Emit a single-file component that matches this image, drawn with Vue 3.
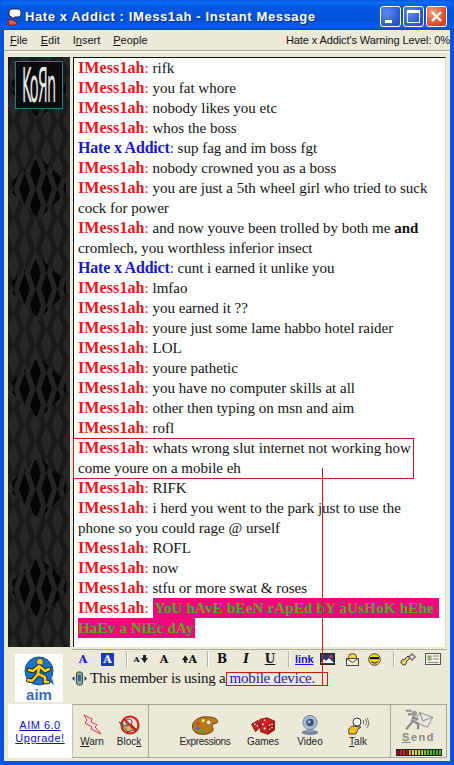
<script setup>
const names = { me: 'IMess1ah', them: 'Hate x Addict' }

const lines = [
  { who: 'me', text: 'rifk' },
  { who: 'me', text: 'you fat whore' },
  { who: 'me', text: 'nobody likes you etc' },
  { who: 'me', text: 'whos the boss' },
  { who: 'them', text: 'sup fag and im boss fgt' },
  { who: 'me', text: 'nobody crowned you as a boss' },
  { who: 'me', text: 'you are just a 5th wheel girl who tried to suck', more: 'cock for power' },
  { who: 'me', text: 'and now youve been trolled by both me ', bold: 'and', more: 'cromlech, you worthless inferior insect' },
  { who: 'them', text: 'cunt i earned it unlike you' },
  { who: 'me', text: 'lmfao' },
  { who: 'me', text: 'you earned it ??' },
  { who: 'me', text: 'youre just some lame habbo hotel raider' },
  { who: 'me', text: 'LOL' },
  { who: 'me', text: 'youre pathetic' },
  { who: 'me', text: 'you have no computer skills at all' },
  { who: 'me', text: 'other then typing on msn and aim' },
  { who: 'me', text: 'rofl' },
  { who: 'me', text: 'whats wrong slut internet not working how', more: 'come youre on a mobile eh' },
  { who: 'me', text: 'RIFK' },
  { who: 'me', text: 'i herd you went to the park just to use the', more: 'phone so you could rage @ urself' },
  { who: 'me', text: 'ROFL' },
  { who: 'me', text: 'now' },
  { who: 'me', text: 'stfu or more swat & roses' }
]

const meter = ['#a01010', '#d02020', '#d02020', '#a01010', '#e0b020', '#e8d820', '#e8d820', '#c8d820', '#a0d020', '#80c820', '#60c020', '#50b820', '#40b020', '#40b020', '#40b020']
</script>

<template>
  <div class="win">
    <div class="titlebar">
      <svg class="appicon" width="16" height="18" viewBox="0 0 16 18">
        <path d="M5 1h8l2 2v4l-2 2H9L6 11V9H5L3 7V3z" fill="#fff" stroke="#223" stroke-width="1" />
        <path d="M2 12l5 0 4 3-2 2H3z" fill="#e06050" stroke="#802020" stroke-width="1" />
      </svg>
      <span class="title">Hate x Addict : IMess1ah - Instant Message</span>
      <div class="winbtns">
        <div class="wb min"><i></i></div>
        <div class="wb max"><i></i></div>
        <div class="wb close">
          <svg width="13" height="13" viewBox="0 0 13 13"><path d="M2 2l9 9M11 2l-9 9" stroke="#fff" stroke-width="2.4" /></svg>
        </div>
      </div>
    </div>

    <div class="client">
      <div class="menubar">
        <span class="mi"><u>F</u>ile</span>
        <span class="mi"><u>E</u>dit</span>
        <span class="mi">I<u>n</u>sert</span>
        <span class="mi"><u>P</u>eople</span>
        <span class="warnlevel">Hate x Addict's Warning Level: 0%</span>
      </div>

      <div class="main">
        <div class="sidepanel">
          <svg class="harlequin" width="62" height="590">
            <defs>
              <pattern id="dia" width="22" height="64" patternUnits="userSpaceOnUse">
                <rect width="22" height="64" fill="#191919" />
                <path d="M5.500 0L11 16 5.500 32 0 16zM5.500 32L11 48 5.500 64 0 48zM16.500 -16L22 0 16.500 16 11 0zM16.500 16L22 32 16.500 48 11 32zM16.500 48L22 64 16.500 80 11 64z" fill="#272727" />
              </pattern>
              <pattern id="dark" width="22" height="64" patternUnits="userSpaceOnUse">
                <rect width="22" height="64" fill="#232323" />
                <path d="M5.500 0L11 16 5.500 32 0 16zM5.500 32L11 48 5.500 64 0 48zM16.500 -16L22 0 16.500 16 11 0zM16.500 16L22 32 16.500 48 11 32zM16.500 48L22 64 16.500 80 11 64z" fill="#050505" />
              </pattern>
              <pattern id="big" width="62" height="100" patternUnits="userSpaceOnUse">
                <path d="M31 0L58 24 58 36 31 62 4 36 4 24z" fill="url(#dark)" />
              </pattern>
            </defs>
            <rect width="62" height="590" fill="url(#dia)" />
            <rect width="62" height="590" fill="url(#big)" />
          </svg>
          <div class="korn"><span>KoЯn</span></div>
        </div>

        <div class="chat">
          <div v-for="(l, i) in lines" :key="i" class="msg">
            <b :class="l.who">{{ names[l.who] }}</b><span :class="l.who + ' colon'">:</span> {{ l.text }}<b v-if="l.bold">{{ l.bold }}</b>
            <template v-if="l.more"><br>{{ l.more }}</template>
          </div>
          <div class="msg">
            <b class="me">IMess1ah</b><span class="me colon">:</span> <b class="loud first">YoU hAvE bEeN rApEd bY aUsHoK hEhe</b><br>
            <b class="loud">HaEv a NiEc dAy</b>
          </div>
        </div>
      </div>

      <div class="lower">
        <div class="logo">
          <svg width="48" height="33" viewBox="0 0 48 33">
            <circle cx="24" cy="17" r="14" fill="#1c74c8" stroke="#0c4a90" stroke-width="1" />
            <path d="M33 27l6 4-2-7z" fill="#1c74c8" />
            <circle cx="25" cy="8" r="3.400" fill="#f8d020" stroke="#333" stroke-width=".8" />
            <path d="M24 12l-6 5-4-1M24 12l6 5 4-2M24 12l-1 8-6 7-4-1M23 20l7 3 0 5 3 0" fill="none" stroke="#222" stroke-width="4.400" stroke-linecap="round" stroke-linejoin="round" />
            <path d="M24 12l-6 5-4-1M24 12l6 5 4-2M24 12l-1 8-6 7-4-1M23 20l7 3 0 5 3 0" fill="none" stroke="#f8d020" stroke-width="2.600" stroke-linecap="round" stroke-linejoin="round" />
          </svg>
          <span class="aimword">aim</span>
        </div>

        <div class="compose">
          <div class="fmtbar">
            <span class="fa bluea">A</span>
            <span class="fa boxa">A</span>
            <i class="sep s1"></i>
            <span class="fa shrink">
              <small>A</small>
              <svg width="7" height="8" viewBox="0 0 7 8"><path d="M2 0h3v3h2L3.500 8 0 3h2z" fill="#222" /></svg>
            </span>
            <span class="fa plain">A</span>
            <span class="fa grow">
              <svg width="7" height="8" viewBox="0 0 7 8"><path d="M2 8h3V5h2L3.500 0 0 5h2z" fill="#222" /></svg>
              <span>A</span>
            </span>
            <i class="sep s2"></i>
            <span class="fb bold">B</span>
            <span class="fb ital">I</span>
            <span class="fb und">U</span>
            <i class="sep s3"></i>
            <span class="linkbtn">link</span>
            <svg class="pic" width="15" height="12" viewBox="0 0 15 12">
              <rect x=".5" y=".5" width="14" height="11" fill="#283868" stroke="#222" />
              <path d="M1 10l3-4 2 2 3-3 5 5z" fill="#fff" />
              <circle cx="11" cy="3.500" r="1.500" fill="#e04040" />
            </svg>
            <svg class="mail" width="13" height="13" viewBox="0 0 13 13">
              <circle cx="6.500" cy="4.500" r="4" fill="#f4d840" stroke="#444" />
              <rect x=".5" y="5.500" width="12" height="7" fill="#f8f0d0" stroke="#444" />
              <path d="M.5 5.500l6 4 6-4" fill="none" stroke="#444" />
            </svg>
            <svg class="smile" width="13" height="13" viewBox="0 0 13 13">
              <circle cx="6.500" cy="6.500" r="5.800" fill="#f4d820" stroke="#444" />
              <path d="M2 4h9v2.200H2z" fill="#111" />
              <path d="M3.500 8.500c1.500 2 4.500 2 6 0" fill="none" stroke="#111" stroke-width="1.200" />
            </svg>
            <i class="sep s4"></i>
            <svg class="key" width="16" height="13" viewBox="0 0 16 13">
              <path d="M1 9c0-2 2-3 3-2l4-4 2 2-4 4c1 2-1 3-2 3s-3-1-3-3z" fill="#f0d860" stroke="#333" />
              <path d="M11 1h2v2h2v2h-2v2h-2V5H9V3h2z" fill="#fff" stroke="#333" stroke-width=".8" />
            </svg>
            <svg class="card" width="16" height="12" viewBox="0 0 16 12">
              <rect x=".5" y=".5" width="15" height="11" fill="#f2f0e0" stroke="#555" />
              <rect x="2.500" y="2.500" width="4" height="5" fill="#90a870" />
              <path d="M8 3h5.500M8 6h5.500M2.500 9.500h11" stroke="#888" />
            </svg>
          </div>
          <div class="status">
            <svg width="15" height="15" viewBox="0 0 15 15">
              <rect x="4.500" y="1" width="6" height="13" rx="2" fill="#8cb08c" stroke="#345" />
              <rect x="6" y="4" width="3" height="6" fill="#3060b0" />
              <path d="M2.500 5L0 7.500 2.500 10zM12.500 5L15 7.500 12.500 10z" fill="#333" />
            </svg>
            <span class="member">This member is using a</span>
            <span class="mobile">mobile device.</span>
          </div>
        </div>
      </div>

      <div class="bottom">
        <div class="upgrade">
          <a>AIM 6.0</a>
          <a>Upgrade!</a>
        </div>
        <div class="actions">
          <div class="group warnblock">
            <div class="tool warn">
              <svg width="20" height="21" viewBox="0 0 20 21">
                <path d="M2 1l8 4-1 3 6 3-2 2 6 7-10-5 1-2-7-4 2-3z" fill="#fbeaea" stroke="#d83030" />
              </svg>
              <span><u>W</u>arn</span>
            </div>
            <div class="tool block">
              <svg width="22" height="20" viewBox="0 0 22 20">
                <circle cx="12" cy="10" r="8.500" fill="#f4e0c0" stroke="#d02020" stroke-width="2.200" />
                <circle cx="11" cy="7" r="3" fill="#e8e8f0" stroke="#555" />
                <path d="M1 7l7 4 5-2 5 5-8 3z" fill="#d8b060" stroke="#444" />
                <path d="M6 4l12 12" stroke="#d02020" stroke-width="2.200" />
              </svg>
              <span>Bloc<u>k</u></span>
            </div>
          </div>
          <div class="group fun">
            <div class="tool expr">
              <svg width="30" height="19" viewBox="0 0 30 21">
                <path d="M1 11C2 4 10 0 18 1c6 0 11 2 11 5 0 3-5 2-6 4-1 3 3 4 0 7-5 4-12 4-17 2-3-1-5-4-5-8z" fill="#b87818" stroke="#5a3808" />
                <circle cx="7" cy="8" r="2" fill="#d04040" />
                <circle cx="13" cy="5" r="2" fill="#e8e060" />
                <circle cx="7" cy="14" r="2" fill="#4070d0" />
                <circle cx="13" cy="17" r="2" fill="#50a040" />
                <circle cx="19" cy="7" r="2" fill="#f0f0f0" />
              </svg>
              <span>Expressions</span>
            </div>
            <div class="tool games">
              <svg width="30" height="18" viewBox="0 0 30 22">
                <path d="M1 9l8-5 3 8-6 6z" fill="#c82020" stroke="#601010" />
                <path d="M11 3l9-2 9 4v11l-8 5-9-3z" fill="#d02020" stroke="#601010" />
                <path d="M20 8l9-3v11l-8 5z" fill="#a81010" />
                <g fill="#fff"><circle cx="5" cy="9" r="1" /><circle cx="8" cy="11" r="1" /><circle cx="15" cy="9" r="1.200" /><circle cx="17" cy="14" r="1.200" /><circle cx="23" cy="10" r="1" /><circle cx="26" cy="9" r="1" /><circle cx="23" cy="15" r="1" /><circle cx="26" cy="13" r="1" /><circle cx="17" cy="4" r="1" /></g>
              </svg>
              <span>Games</span>
            </div>
            <div class="tool video">
              <svg width="20" height="20" viewBox="0 0 22 24">
                <ellipse cx="11" cy="21" rx="10" ry="3" fill="#7088a8" />
                <path d="M8 15h6l2 5H6z" fill="#90a4c0" />
                <circle cx="11" cy="9" r="8.500" fill="#a8bcd4" stroke="#607898" />
                <circle cx="11" cy="9" r="4.500" fill="#405878" />
                <circle cx="10" cy="8" r="1.500" fill="#c8d8e8" />
              </svg>
              <span>Video</span>
            </div>
            <div class="tool talk">
              <svg width="21" height="18" viewBox="0 0 21 18">
                <path d="M1 17c-1-4 0-7 4-8l8 1-3 2-2 5z" fill="#f0c020" stroke="#443" />
                <circle cx="9" cy="5" r="4" fill="#fff" stroke="#333" />
                <path d="M15 3c1 1 1 3 0 4M17 2c2 2 2 5 0 7M19 1c2 3 2 7 0 10" fill="none" stroke="#666" />
              </svg>
              <span><u>T</u>alk</span>
            </div>
          </div>
          <div class="send">
            <svg width="30" height="23" viewBox="0 0 30 25">
              <path d="M16 5l14 5-6 11-14-6z" fill="#e8e8e0" stroke="#8a8a8a" />
              <path d="M16 5l3 9 11-4" fill="none" stroke="#8a8a8a" />
              <circle cx="10" cy="6" r="3" fill="#999" />
              <path d="M9 9l-2 7-6 7M8 14l6 3 0 6M9 10l5 3M1 3h6M3 7h4" fill="none" stroke="#8a8a8a" stroke-width="2.400" />
            </svg>
            <span class="sendlabel"><u>S</u>end</span>
            <div class="meter">
              <i v-for="(c, n) in meter" :key="n" :style="{ background: c }"></i>
            </div>
          </div>
        </div>
      </div>
    </div>

    <!-- red annotations drawn on top of the screenshot -->
    <div class="note box1"></div>
    <div class="note box2"></div>
    <div class="note wire"></div>
  </div>
</template>

<style>
html, body { margin: 0; background: #ece9d8; }
</style>

<style scoped>
.win {
  position: relative;
  width: 454px;
  height: 765px;
  overflow: hidden;
  display: flex;
  flex-direction: column;
  background: #0855dd;
  font-family: "Liberation Sans", Arial, sans-serif;
}
.titlebar {
  height: 30px;
  box-sizing: border-box;
  flex: none;
  display: flex;
  align-items: center;
  padding: 3px 7px 0 6px;
  background: linear-gradient(#0a5ae0 0, #0a6cf0 8%, #0357e0 25%, #0251d8 70%, #0a60e8 90%, #0344c0 100%);
  border-radius: 7px 7px 0 0;
}
.appicon { flex: none; margin-right: 3px; }
.title {
  color: #fff;
  font-size: 13px;
  font-weight: bold;
  letter-spacing: 0.6px;
  text-shadow: 1px 1px 1px #0a2a80;
  white-space: nowrap;
}
.winbtns { margin-left: auto; display: flex; gap: 2px; }
.wb {
  width: 21px;
  height: 21px;
  box-sizing: border-box;
  border: 1px solid #fff;
  border-radius: 3px;
  background: radial-gradient(circle at 30% 30%, #5c8cf0, #2a52d0 75%);
  position: relative;
}
.wb.close {
  background: radial-gradient(circle at 30% 30%, #f0a080, #d84020 75%);
  display: flex;
  align-items: center;
  justify-content: center;
}
.min i { position: absolute; left: 4px; bottom: 3px; width: 7px; height: 3px; background: #fff; }
.max i { position: absolute; left: 3px; top: 3px; width: 13px; height: 13px; box-sizing: border-box; border: 1px solid #fff; border-top-width: 3px; }

.client {
  flex: 1;
  margin: 0 4px 4px 4px;
  background: #ece9d8;
  display: flex;
  flex-direction: column;
  min-height: 0;
}
.menubar {
  height: 20px;
  flex: none;
  display: flex;
  align-items: center;
  font-size: 11px;
  color: #111;
  padding-left: 6px;
  border-bottom: 1px solid #aca899;
  box-shadow: 0 1px 0 #fff;
}
.mi { margin-right: 13px; }
.warnlevel { margin-left: auto; white-space: nowrap; letter-spacing: -0.1px; }

.main {
  display: flex;
  height: 590px;
  flex: none;
  margin-top: 6px;
  padding-left: 4px;
}
.sidepanel {
  position: relative;
  width: 62px;
  height: 590px;
  flex: none;
  background: #191919;
}
.harlequin { display: block; }
.korn {
  position: absolute;
  left: 7px;
  top: 4px;
  width: 48px;
  height: 48px;
  box-sizing: border-box;
  border: 1px solid #2a7a90;
  background: #0a0a0a;
  display: flex;
  align-items: center;
  justify-content: center;
}
.korn span {
  color: #e4e4e4;
  font-family: "DejaVu Sans", sans-serif;
  font-size: 17px;
  line-height: 14px;
  transform: scale(.85, 2.8);
  letter-spacing: -1px;
}
.chat {
  flex: none;
  width: 373px;
  margin-left: 3px;
  height: 590px;
  box-sizing: border-box;
  background: #fff;
  border-top: 1px solid #111;
  border-left: 1px solid #111;
  border-right: 1px solid #dedbcb;
  padding-left: 4px;
  font-family: "Liberation Serif", "Times New Roman", serif;
  font-size: 15px;
  line-height: 20px;
  color: #111;
  white-space: nowrap;
}
.msg b.me { letter-spacing: 0.1px; font-size: 16px; }
.msg b.them { letter-spacing: -0.2px; font-size: 16px; }
.me { color: #e01818; }
.them { color: #1818c8; }
.colon { font-weight: normal; }
.loud {
  display: inline-block;
  line-height: 20px;
  color: #4cb020;
  background: #f0087a;
  font-size: 15px;
  letter-spacing: 0.2px;
  padding-right: 1px;
}
.loud.first { padding: 0 5px 0 2px; }

.lower { display: flex; flex: none; height: 57px; }
.logo {
  width: 48px;
  height: 48px;
  flex: none;
  margin: 7px 0 0 11px;
  background: #fff;
  display: flex;
  flex-direction: column;
  align-items: center;
}
.aimword {
  color: #3a6ac0;
  font-weight: bold;
  font-size: 15px;
  line-height: 14px;
  margin-top: 1px;
}
.compose { margin-left: 9px; flex: 1; margin-right: 3px; }
.fmtbar {
  margin-top: 2px;
  height: 19px;
  box-sizing: border-box;
  border-top: 1px solid #b0ac9c;
  display: flex;
  align-items: center;
  padding-left: 6px;
  color: #111;
}
.fmtbar > * { flex: none; }
.sep { width: 1px; height: 16px; background: #b8b4a4; box-shadow: 1px 0 0 #fff; }
.s1 { margin-left: 12px; }
.s2 { margin-left: 10px; }
.s3 { margin-left: 12px; }
.s4 { margin-left: 12px; }
.fa {
  font-family: "DejaVu Serif", serif;
  font-weight: bold;
  font-size: 11px;
  text-align: center;
}
.bluea { width: 10px; color: #1818d0; }
.boxa { width: 13px; margin-left: 13px; height: 13px; line-height: 13px; background: #1838c8; color: #fff; }
.shrink { width: 15px; margin-left: 6px; display: flex; align-items: center; gap: 1px; justify-content: center; }
.shrink small { font-size: 8px; }
.plain { width: 10px; margin-left: 11px; }
.grow { width: 15px; margin-left: 13px; display: flex; align-items: center; gap: 0; justify-content: center; }
.fb { width: 12px; margin-left: 12px; text-align: center; font-family: "DejaVu Serif", serif; font-size: 12px; font-weight: bold; }
.bold { margin-left: 8px; }
.ital { font-style: italic; }
.und { text-decoration: underline; }
.linkbtn {
  width: 17px;
  margin-left: 6px;
  color: #1818c8;
  font-weight: bold;
  font-size: 11px;
  letter-spacing: -0.1px;
  text-decoration: underline;
  white-space: nowrap;
}
.pic { margin-left: 8px; }
.mail { margin-left: 11px; }
.smile { margin-left: 9px; }
.key { margin-left: 6px; }
.card { margin-left: 9px; }
.status {
  display: flex;
  align-items: center;
  height: 19px;
  margin-top: 1px;
  font-family: "Liberation Serif", serif;
  font-size: 15px;
  color: #111;
  white-space: pre;
}
.status svg { margin-right: 3px; }
.member { letter-spacing: -0.2px; }
.mobile { margin-left: 4px; color: #1c1ca8; letter-spacing: -0.2px; }

.bottom { display: flex; flex: none; height: 54px; }
.upgrade {
  width: 64px;
  margin-left: 4px;
  padding-top: 2px;
  box-sizing: border-box;
  background: #fff;
  display: flex;
  flex-direction: column;
  justify-content: center;
  align-items: center;
  flex: none;
  font-size: 11px;
  line-height: 13px;
  letter-spacing: 0.5px;
}
.upgrade a { color: #1010c8; text-decoration: underline; }
.actions {
  width: 375px;
  box-sizing: border-box;
  border: 1px solid #a8a498;
  border-left-color: #c8c4b4;
  display: flex;
  font-size: 10px;
  color: #222;
}
.group {
  display: flex;
  align-items: flex-end;
  height: 100%;
  box-sizing: border-box;
  padding-bottom: 10px;
  border-right: 1px solid #a8a498;
  flex: none;
}
.warnblock { width: 76px; }
.fun { width: 242px; }
.tool { display: flex; flex-direction: column; align-items: center; white-space: nowrap; flex: none; }
.tool span { margin-top: 1px; }
.warn { margin-left: 4px; width: 30px; }
.block { margin-left: 7px; width: 30px; }
.expr { margin-left: 27px; width: 58px; letter-spacing: -0.3px; }
.games { margin-left: 13px; width: 32px; }
.video { margin-left: 14px; width: 34px; }
.talk { margin-left: 18px; width: 26px; }
.send { flex: 1; display: flex; flex-direction: column; align-items: center; padding-top: 3px; }
.sendlabel { color: #8a8a84; font-weight: bold; font-size: 11px; letter-spacing: 1.5px; line-height: 13px; }
.meter { display: flex; gap: 1px; padding: 1px; margin-top: 5px; background: #222; height: 5px; }
.meter i { width: 2px; height: 5px; display: block; }

.note { position: absolute; box-sizing: border-box; }
.box1 { left: 73px; top: 438px; width: 341px; height: 41px; border: 1px solid #c81818; }
.box2 { left: 226px; top: 672px; width: 102px; height: 14px; border: 1px solid #c81818; }
.wire { left: 322px; top: 468px; width: 1px; height: 217px; background: #c81818; }
</style>
